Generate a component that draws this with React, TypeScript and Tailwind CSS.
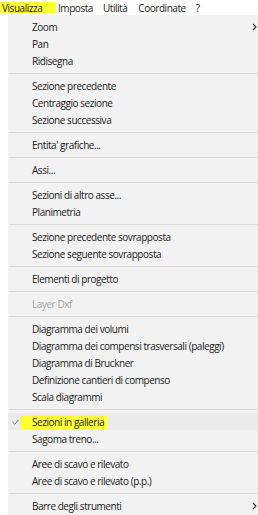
import React from 'react';

type Entry =
    | { kind: 'item'; label: string; sub?: boolean; disabled?: boolean; checked?: boolean; marked?: boolean }
    | { kind: 'sep' };

const item = (label: string, extra: Partial<Omit<Extract<Entry, { kind: 'item' }>, 'kind' | 'label'>> = {}): Entry => ({ kind: 'item', label, ...extra });
const sep: Entry = { kind: 'sep' };

const entries: Entry[] = [
    item('Zoom', { sub: true }),
    item('Pan'),
    item('Ridisegna'),
    sep,
    item('Sezione precedente'),
    item('Centraggio sezione'),
    item('Sezione successiva'),
    sep,
    item("Entita' grafiche..."),
    sep,
    item('Assi...'),
    sep,
    item('Sezioni di altro asse...'),
    item('Planimetria'),
    sep,
    item('Sezione precedente sovrapposta'),
    item('Sezione seguente sovrapposta'),
    sep,
    item('Elementi di progetto'),
    sep,
    item('Layer Dxf', { disabled: true }),
    sep,
    item('Diagramma dei volumi'),
    item('Diagramma dei compensi trasversali (paleggi)'),
    item('Diagramma di Bruckner'),
    item('Definizione cantieri di compenso'),
    item('Scala diagrammi'),
    sep,
    item('Sezioni in galleria', { checked: true, marked: true }),
    item('Sagoma treno...'),
    sep,
    item('Aree di scavo e rilevato'),
    item('Aree di scavo e rilevato (p.p.)'),
    sep,
    item('Barre degli strumenti', { sub: true }),
];

const Chevron = () => (
    <svg width="5" height="8" viewBox="0 0 5 8" className="shrink-0">
        <path d="M1 1 L4 4 L1 7" fill="none" stroke="#333" strokeWidth="1.2" />
    </svg>
);

const Check = () => (
    <svg width="7" height="6" viewBox="0 0 7 6">
        <path d="M0.5 3 L2.8 5.2 L6.5 0.8" fill="none" stroke="#6b6b6b" strokeWidth="1" />
    </svg>
);

const MenuRow = ({ e }: { e: Extract<Entry, { kind: 'item' }> }) => (
    <div className={`h-[17px] flex items-center ${e.marked ? 'bg-[#ebebeb]' : ''}`}>
        <div className="w-[24px] flex items-center pl-[4px]">{e.checked && <Check />}</div>
        <div className="flex-grow flex items-center">
            <span
                className={`leading-none whitespace-nowrap ${e.disabled ? 'text-[#a3a3a3]' : 'text-[#1b1b1b]'} ${e.marked ? 'bg-[#ffff33] pl-[12px] -ml-[12px] pr-[3px] py-[2px]' : ''}`}
            >
                {e.label}
            </span>
        </div>
        <div className="w-[6px] flex items-center">{e.sub && <Chevron />}</div>
    </div>
);

export default function App() {
    return (
        <div className="w-[258px] h-[515px] bg-white overflow-hidden text-[10px] tracking-[-0.45px] font-['Open_Sans','Noto_Sans',sans-serif]">
            {/* Menu bar */}
            <nav className="h-[15px] flex items-center text-[#1b1b1b] leading-none whitespace-nowrap">
                <span className="bg-[#ffff33] pl-[2px] w-[56px] h-[11px] flex items-center">Visualizza</span>
                <span className="ml-[2px]">Imposta</span>
                <span className="ml-[10px]">Utilità</span>
                <span className="ml-[11px]">Coordinate</span>
                <span className="ml-[10px]">?</span>
            </nav>

            {/* Dropdown */}
            <div className="ml-[8px] bg-[#f2f2f2] pt-[3px] pb-[2px] h-[500px]">
                {entries.map((e, i) =>
                    e.kind === 'sep' ? (
                        <div key={i} className="h-[8px] flex items-center pl-[1px]">
                            <div className="w-full h-px bg-[#d9d9d9]" />
                        </div>
                    ) : (
                        <MenuRow key={i} e={e} />
                    )
                )}
            </div>
        </div>
    );
}
